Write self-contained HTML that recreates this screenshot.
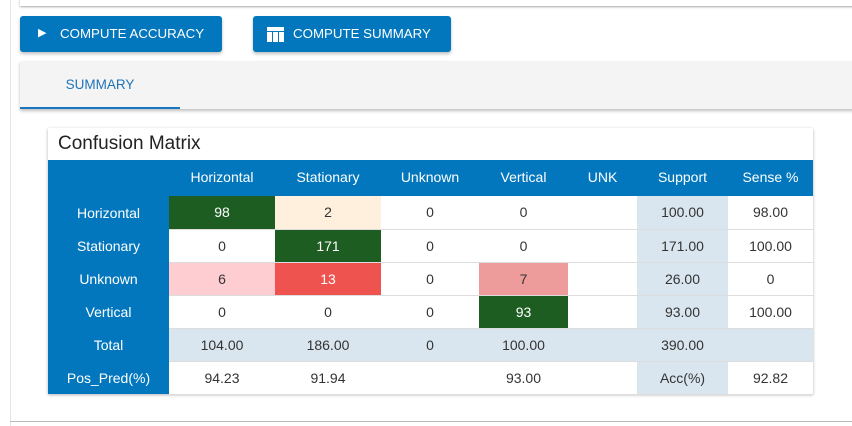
<!DOCTYPE html>
<html><head><style>
*{box-sizing:border-box;margin:0;padding:0}
body{width:852px;height:426px;background:#fff;font-family:"Liberation Sans",sans-serif;position:relative;overflow:hidden}
.vl{position:absolute;left:10px;top:0;width:1px;height:426px;background:#e4e4e4}
.top{position:absolute;left:20px;top:-4px;width:840px;height:10px;background:#fff;box-shadow:0 1px 2px rgba(0,0,0,.35)}
.btn{position:absolute;top:16px;height:36px;background:#0277bd;color:#fff;border-radius:3px;font-size:13.3px;line-height:35px;box-shadow:0 2px 3px rgba(0,0,0,.25)}
.tabs{position:absolute;left:20px;top:61px;width:840px;height:48px;background:#f4f4f4;box-shadow:0 2px 3px rgba(0,0,0,.25)}
.tab{position:absolute;left:0;top:0;width:160px;height:48px;color:#1f74b8;font-size:13.5px;text-align:center;line-height:48px;border-bottom:2px solid #1976c0}
.card{position:absolute;left:48px;top:128px;width:765px;height:266px;background:#fff;box-shadow:0 1px 3px rgba(0,0,0,.3)}
.title{position:absolute;left:10px;top:5px;font-size:19px;color:#222}
table{position:absolute;left:0;top:32px;border-collapse:collapse;table-layout:fixed;font-size:14px}
td,th{text-align:center;color:#333;height:33px;padding:0;border-bottom:1px solid #ddd}
th{background:#0277bd;color:#fff;font-weight:normal;height:36px;border:none;padding-bottom:2px}
td.h{background:#0277bd;color:#fff;border-bottom:none}
.g{background:#1e5d22;color:#fff}.c{background:#fff0de}.p{background:#fecdd2}.r{background:#ef5350;color:#fff}.q{background:#ee9b9b}
.b{background:#dae6ef}
.bot{position:absolute;left:10px;top:421px;width:842px;height:1px;background:#bbb}
</style></head><body>
<div class="vl"></div><div class="top"></div>
<div class="btn" style="left:20px;width:202px"><span style="position:absolute;left:18px;top:0;font-size:11px">&#9654;</span><span style="position:absolute;left:40px">COMPUTE ACCURACY</span></div>
<div class="btn" style="left:253px;width:198px">
<svg style="position:absolute;left:14px;top:11px" width="17" height="15" viewBox="0 0 17 15"><rect x="0" y="0" width="17" height="4" fill="#fff"/><rect x="0" y="5" width="5" height="10" fill="#fff"/><rect x="6" y="5" width="5" height="10" fill="#fff"/><rect x="12" y="5" width="5" height="10" fill="#fff"/></svg>
<span style="position:absolute;left:40px">COMPUTE SUMMARY</span></div>
<div class="tabs"><div class="tab">SUMMARY</div></div>
<div class="card"><div class="title">Confusion Matrix</div>
<table>
<colgroup><col style="width:121px"><col style="width:106px"><col style="width:106px"><col style="width:98px"><col style="width:89px"><col style="width:69px"><col style="width:91px"><col style="width:85px"></colgroup>
<tr><th></th><th>Horizontal</th><th>Stationary</th><th>Unknown</th><th>Vertical</th><th>UNK</th><th>Support</th><th>Sense %</th></tr>
<tr><td class="h">Horizontal</td><td class="g">98</td><td class="c">2</td><td>0</td><td>0</td><td></td><td class="b">100.00</td><td>98.00</td></tr>
<tr><td class="h">Stationary</td><td>0</td><td class="g">171</td><td>0</td><td>0</td><td></td><td class="b">171.00</td><td>100.00</td></tr>
<tr><td class="h">Unknown</td><td class="p">6</td><td class="r">13</td><td>0</td><td class="q">7</td><td></td><td class="b">26.00</td><td>0</td></tr>
<tr><td class="h">Vertical</td><td>0</td><td>0</td><td>0</td><td class="g">93</td><td></td><td class="b">93.00</td><td>100.00</td></tr>
<tr><td class="h">Total</td><td class="b">104.00</td><td class="b">186.00</td><td class="b">0</td><td class="b">100.00</td><td class="b"></td><td class="b">390.00</td><td class="b"></td></tr>
<tr><td class="h">Pos_Pred(%)</td><td>94.23</td><td>91.94</td><td></td><td>93.00</td><td></td><td class="b">Acc(%)</td><td>92.82</td></tr>
</table></div>
<div class="bot"></div>
</body></html>
